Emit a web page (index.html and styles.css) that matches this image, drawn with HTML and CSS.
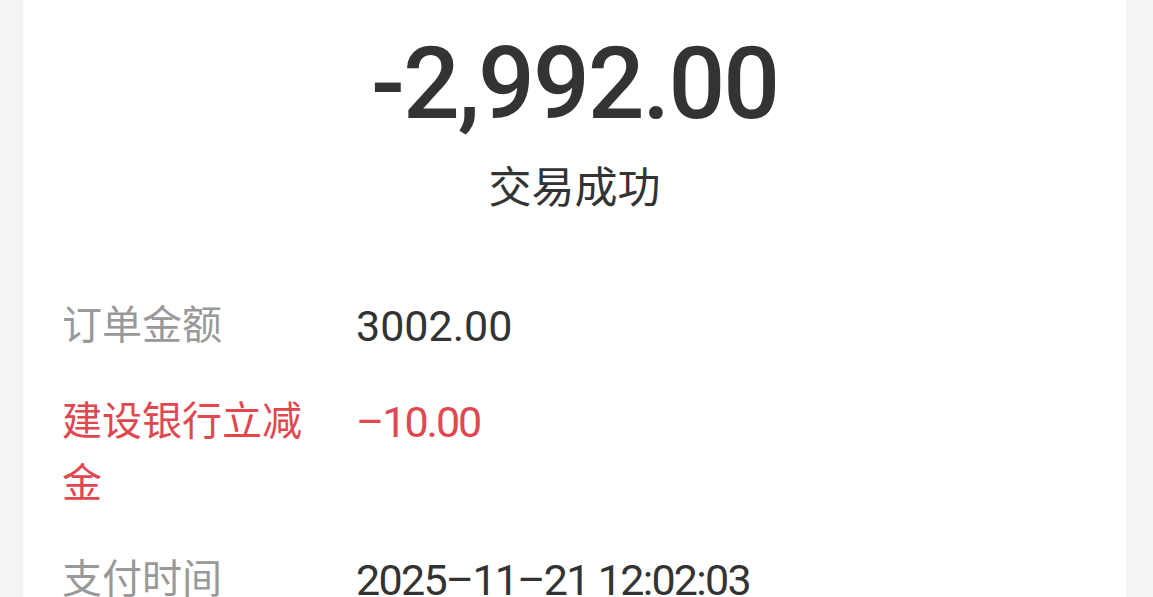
FILE: index.html
```html
<!DOCTYPE html>
<html lang="zh-CN">
<head>
    <meta charset="UTF-8">
    <meta name="viewport" content="width=device-width, initial-scale=1.0">
    <title>交易详情</title>
    <link rel="stylesheet" href="styles.css">
</head>
<body>
    <main class="page">
        <div class="bill">
            <div class="bill-head">
                <div class="bill-amount">-2,992.00</div>
                <div class="bill-status">交易成功</div>
            </div>
            <div class="bill-rows">
                <div class="bill-row">
                    <div class="bill-label">订单金额</div>
                    <div class="bill-value">3002.00</div>
                </div>
                <div class="bill-row discount">
                    <div class="bill-label">建设银行立减金</div>
                    <div class="bill-value">&ndash;10.00</div>
                </div>
                <div class="bill-row">
                    <div class="bill-label">支付时间</div>
                    <div class="bill-value narrow">2025&ndash;11&ndash;21 12:02:03</div>
                </div>
            </div>
        </div>
    </main>
</body>
</html>
```

FILE: styles.css
```css
* {
    box-sizing: border-box;
}

html, body {
    height: 100%;
}

body {
    margin: 0;
    background-color: #f4f4f4;
    font-family: Roboto, "Noto Sans CJK SC", sans-serif;
    color: #333;
    overflow: hidden;
}

.page {
    padding: 0 27px 0 23px;
    height: 100%;
}

.bill {
    background-color: #fff;
    height: 100%;
    padding: 0 39px;
}

.bill-head {
    display: flex;
    flex-direction: column;
    align-items: center;
    padding-top: 26px;
}

.bill-amount {
    font-size: 100px;
    font-weight: 500;
    letter-spacing: -2px;
    line-height: 116px;
    color: #333;
}

.bill-status {
    font-size: 43px;
    line-height: 60px;
    margin-top: 16px;
    color: #333;
}

.bill-rows {
    margin-top: 77px;
}

.bill-row {
    display: flex;
    margin-bottom: 34px;
    font-size: 40px;
    line-height: 62px;
}

.bill-label {
    width: 294px;
    flex-shrink: 0;
    padding-right: 40px;
    color: #999;
}

.bill-value {
    font-size: 43px;
    color: #333;
}

.bill-value.narrow {
    letter-spacing: -1.7px;
}

.discount .bill-label,
.discount .bill-value {
    color: #e0474f;
}

.discount .bill-value {
    letter-spacing: -2px;
}
```
